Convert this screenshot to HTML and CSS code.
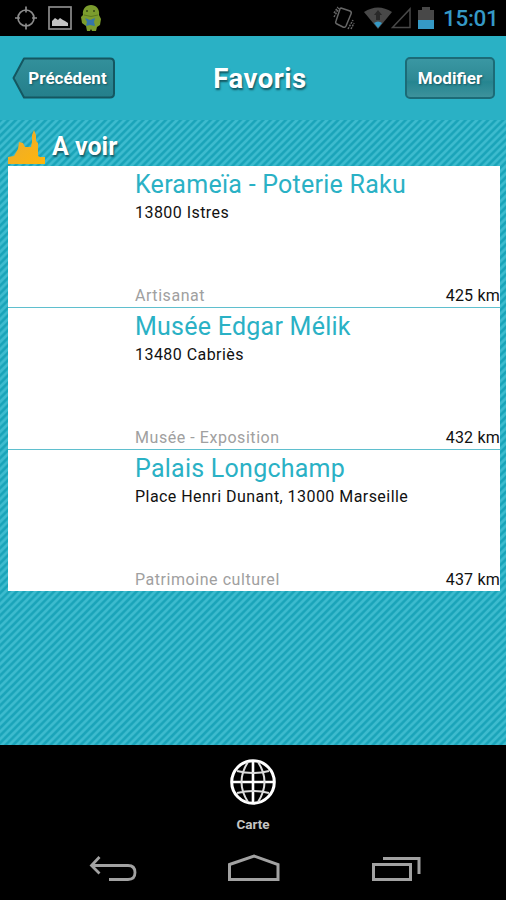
FILE: index.html
```
<!DOCTYPE html>
<html lang="fr">
  <head>
    <meta charset="utf-8">
    <title>Favoris</title>
    <link rel="stylesheet" href="styles.css">
  </head>
  <body>
    <div id="screen">
      <!-- Barre d'état -->
      <div class="status-bar">
        <svg class="gps" width="24" height="26" viewBox="0 0 24 26" fill="none" stroke="#8c8c8c" stroke-width="1.7">
          <circle cx="12" cy="13" r="8"/>
          <path d="M12 1.5v6M12 18.5v6M1 13h5M18 13h5"/>
        </svg>
        <svg class="picture" width="24" height="24" viewBox="0 0 24 24">
          <rect x="1" y="1" width="22" height="22" fill="none" stroke="#8c8c8c" stroke-width="1.7"/>
          <path d="M4 20v-5l3-3 3 2 2-2 3 2 2 1 3 2v3z" fill="#c4c4c4"/>
        </svg>
        <svg class="robot" width="22" height="28" viewBox="0 0 22 28">
          <path d="M3 11C2 5 6 1 11 1s9 4 8 10l2 4-1 6-3 2-1 4h-4l-1-2-1 2H7l-1-5-4-3-1-6z" fill="#7b9c2d"/>
          <path d="M4 11q7 3 14 0" fill="none" stroke="#5b791f"/>
          <path d="M5 14l5 2 5-2-1 4 1 4-5-1-4 1 1-4z" fill="#3475a9"/>
          <circle cx="7" cy="7" r="1" fill="#354916"/>
          <circle cx="14" cy="7" r="1" fill="#354916"/>
        </svg>
        <div class="spacer"></div>
        <svg class="vibrate" width="22" height="26" viewBox="0 0 22 26" fill="none" stroke="#666" stroke-width="1.5">
          <path d="M8 3l9 3q2 1 1 3l-5 12q-1 2-3 1l-6-3q-2-1-1-3L7 4q0-1 1-1z"/>
          <path d="M1 12l5-9M1 8l4-6M15 24l5-9M18 24l3-6" stroke-dasharray="2 1"/>
        </svg>
        <svg class="wifi" width="28" height="22" viewBox="0 0 28 22">
          <path d="M0 5Q14-4 28 5L14 22z" fill="#484848"/>
          <path d="M14 3l4 5h-2v5h-4V8h-2z" fill="#292929"/>
          <path d="M10 16q4-3 8 0l-4 5z" fill="#3599c5"/>
        </svg>
        <svg class="signal" width="20" height="22" viewBox="0 0 20 22">
          <path d="M1.5 20.5L19 2v18.5z" fill="none" stroke="#484848" stroke-width="1.5"/>
        </svg>
        <svg class="battery" width="16" height="22" viewBox="0 0 16 22">
          <path d="M0 3h4V0h8v3h4v10H0z" fill="#484848"/>
          <path d="M0 13h16v9H0z" fill="#3599c5"/>
        </svg>
        <span class="clock">15:01</span>
      </div>

      <div class="header">
        <button class="back">
          <svg width="104" height="42" viewBox="0 0 104 42">
            <defs>
              <linearGradient id="back-fill" x2="0" y2="1">
                <stop offset="0" stop-color="#33909b"/>
                <stop offset="1" stop-color="#247f8b"/>
              </linearGradient>
            </defs>
            <path d="M12 1.5h86q4 0 4 4v31q0 4-4 4H12L1.500 21z" fill="url(#back-fill)" stroke="#145761" stroke-width="2" stroke-linejoin="round"/>
          </svg>
          <span>Précédent</span>
        </button>
        <h1>Favoris</h1>
        <button class="edit">Modifier</button>
      </div>

      <div class="content">
        <div class="section-title">
          <svg width="38" height="34" viewBox="0 0 38 34">
            <defs>
              <linearGradient id="gold" x2="1" y2="1">
                <stop offset="0" stop-color="#e8aa35"/>
                <stop offset="1" stop-color="#ffb60a"/>
              </linearGradient>
            </defs>
            <path d="M0 34v-7l6-1 4-7 1-7 4 1 2 4h6l1-5V5l2-5 2 5v6l2 2v13l2 1h5v7z" fill="url(#gold)"/>
          </svg>
          <h2>A voir</h2>
        </div>

        <div class="list">
          <div class="item">
            <h3>Kerameïa - Poterie Raku</h3>
            <p class="address">13800 Istres</p>
            <div class="infos">
              <span class="category">Artisanat</span>
              <span class="distance">425 km</span>
            </div>
          </div>
          <div class="item">
            <h3>Musée Edgar Mélik</h3>
            <p class="address">13480 Cabriès</p>
            <div class="infos">
              <span class="category">Musée - Exposition</span>
              <span class="distance">432 km</span>
            </div>
          </div>
          <div class="item">
            <h3>Palais Longchamp</h3>
            <p class="address">Place Henri Dunant, 13000 Marseille</p>
            <div class="infos">
              <span class="category">Patrimoine culturel</span>
              <span class="distance">437 km</span>
            </div>
          </div>
        </div>
      </div>

      <div class="tab-bar">
        <svg width="46" height="46" viewBox="0 0 46 46" fill="none" stroke="#fff">
          <circle cx="23" cy="23" r="21.3" stroke-width="3"/>
          <path d="M23 2v42M2 23h42" stroke-width="2.6"/>
          <path d="M18 3Q5 23 18 43M28 3Q41 23 28 43M7 12q16 4 32 0M7 34q16-4 32 0" stroke-width="2" stroke="#ddd"/>
        </svg>
        <span>Carte</span>
      </div>

      <!-- Boutons de navigation -->
      <div class="nav-bar">
        <svg width="48" height="28" viewBox="0 0 48 28" fill="none" stroke="#a2a2a2" stroke-width="2.8">
          <path d="M10.500 3L2.500 11.500l8 8M3 11.500h36q7 0 7 7t-7 7H20"/>
        </svg>
        <svg width="54" height="28" viewBox="0 0 54 28" fill="none" stroke="#a2a2a2" stroke-width="3">
          <path d="M2.500 10.500L27 2l24 8.500V25.500H2.500z"/>
        </svg>
        <svg width="50" height="28" viewBox="0 0 50 28" fill="none" stroke="#a2a2a2" stroke-width="3">
          <path d="M2.500 10.500h37v15h-37zM12 4.500h36V20"/>
        </svg>
      </div>
    </div>
  </body>
</html>
```
FILE: styles.css
```
* {
  box-sizing: border-box;
}
body {
  margin: 0;
  font-family: Roboto, sans-serif;
  background: #000;
}
h1, h2, h3, p {
  margin: 0;
}
svg {
  display: block;
  flex-shrink: 0;
}
button {
  font-family: inherit;
  padding: 0;
  border: none;
  background: none;
}

#screen {
  display: flex;
  flex-direction: column;
  width: 506px;
  height: 900px;
  overflow: hidden;
}

.status-bar {
  display: flex;
  align-items: center;
  height: 36px;
  padding: 0 9px 0 14px;
  background: #000;
}
.picture {
  margin-left: 10px;
}
.robot {
  margin-left: 8px;
}
.spacer {
  flex: 1;
}
.wifi {
  margin-left: 9px;
}
.signal {
  margin-left: -1px;
}
.battery {
  margin-left: 7px;
}
.clock {
  width: 54px;
  margin-left: 9px;
  font-size: 22.5px;
  font-weight: 500;
  line-height: 36px;
  letter-spacing: -0.3px;
  color: #3599c5;
  white-space: nowrap;
}

.header {
  display: grid;
  grid-template-columns: 104px 1fr 104px;
  align-items: center;
  height: 84px;
  padding: 0 11px 0 12px;
  background: #2ab1c5;
}
h1 {
  font-size: 27.5px;
  line-height: 32px;
  letter-spacing: 0.5px;
  text-align: center;
  padding: 2px 0 0 13px;
  color: #fff;
  text-shadow: 1px 2px 2px #145761;
}
.back,
.edit {
  font-size: 17px;
  font-weight: bold;
  color: #fff;
  text-shadow: 1px 1px 2px #145761;
}
.back {
  display: grid;
  align-items: center;
  height: 42px;
}
.back svg,
.back span {
  grid-area: 1 / 1;
}
.back span {
  padding-left: 7px;
}
.edit {
  justify-self: end;
  width: 90px;
  height: 42px;
  border: 2px solid #1c6b77;
  border-radius: 5px;
  background: linear-gradient(#3a97a3, #2d8994 55%, #258590 60%, #3d929c);
}

.content {
  height: 625px;
  padding: 0 6px 0 8px;
  background: repeating-linear-gradient(135deg, #1aa4b9 0, #1aa4b9 1.3px, #3dbbce 2.6px, #3dbbce 4px, #1aa4b9 5.3px);
}
.section-title {
  display: flex;
  align-items: flex-end;
  height: 46px;
  padding-bottom: 2px;
}
h2 {
  margin-left: 6px;
  font-size: 25px;
  line-height: 34px;
  color: #fff;
  text-shadow: 1px 2px 2px #145761;
}
.list {
  height: 425px;
  background: #fff;
}
.item {
  display: flex;
  flex-direction: column;
  height: 142px;
  padding-left: 127px;
  border-bottom: 1px solid #5fbfce;
}
.item:last-child {
  height: 141px;
  border-bottom: none;
}
h3 {
  padding-top: 1px;
  font-size: 25px;
  font-weight: normal;
  line-height: 36px;
  letter-spacing: 0.25px;
  color: #2ab1c5;
}
.address {
  font-size: 16px;
  line-height: 20px;
  letter-spacing: 0.45px;
  color: #111;
}
.infos {
  display: flex;
  justify-content: space-between;
  margin-top: auto;
  font-size: 16px;
  line-height: 22px;
}
.category {
  letter-spacing: 0.55px;
  color: #a0a0a0;
}
.distance {
  letter-spacing: 0.2px;
  color: #111;
}

.tab-bar {
  display: flex;
  flex-direction: column;
  align-items: center;
  height: 95px;
  padding-top: 14px;
  background: #000;
}
.tab-bar span {
  margin-top: 10px;
  font-size: 13.5px;
  font-weight: bold;
  line-height: 18px;
  color: #c4c4c4;
}

.nav-bar {
  display: flex;
  justify-content: space-between;
  height: 60px;
  padding: 14px 85px 0 89px;
  background: #000;
}
```
